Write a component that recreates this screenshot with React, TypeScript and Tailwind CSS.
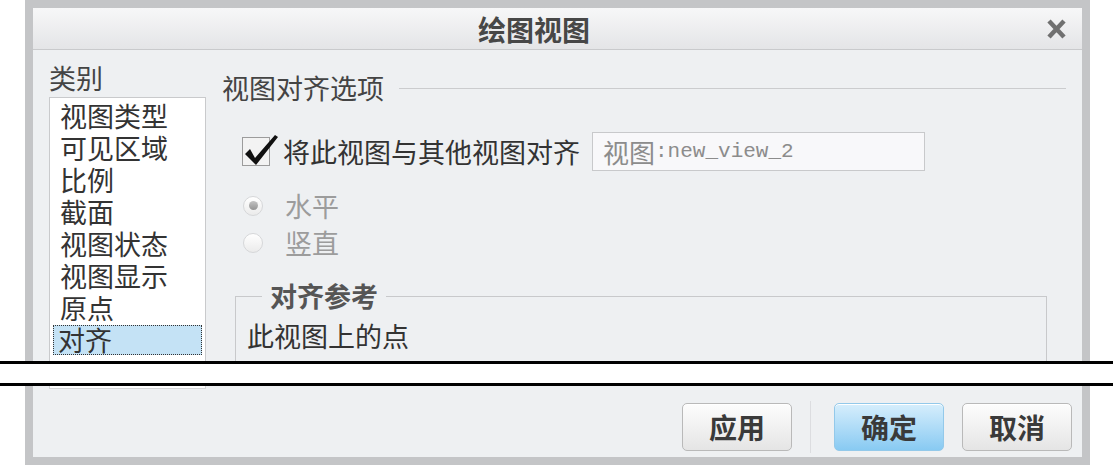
import { useState } from 'react';

const categories = ['视图类型', '可见区域', '比例', '截面', '视图状态', '视图显示', '原点', '对齐'];

function Radio({ label, checked }: { label: string; checked?: boolean }) {
  return (
    <div className="h-[37px] flex items-center pl-[21px]">
      <div className="w-[20px] h-[20px] rounded-full border border-[#d6d7d9] bg-gradient-to-b from-white to-[#ebebeb] flex items-center justify-center">
        {checked && <div className="w-[9px] h-[9px] rounded-full bg-gradient-to-b from-[#c4c4c4] to-[#949494]" />}
      </div>
      <span className="ml-[22px] text-[27px] leading-[30px] text-[#9c9c9c]">{label}</span>
    </div>
  );
}

function DialogButton({ label, primary }: { label: string; primary?: boolean }) {
  return (
    <button
      className={`w-[110px] h-[48px] rounded-[5px] border flex items-center justify-center text-[28px] font-bold text-[#3a3a3a] shadow-[inset_0_1px_0_#ffffff] ${
        primary
          ? 'border-[#93c9ea] bg-gradient-to-b from-[#d6eefc] to-[#88caf2]'
          : 'border-[#b9b9b9] bg-gradient-to-b from-[#fdfdfd] to-[#e5e5e5]'
      }`}
    >
      {label}
    </button>
  );
}

export default function App() {
  const [selected, setSelected] = useState('对齐');
  const [aligned, setAligned] = useState(true);

  return (
    <div className="w-[1115px] h-[466px] bg-white flex flex-col overflow-hidden font-['Noto_Sans_CJK_SC',sans-serif] text-[#333]">
      {/* Upper half of the dialog */}
      <div className="ml-[25px] w-[1065px] h-[361px] shrink-0 overflow-hidden border-x-8 border-t-8 border-[#c4c5c7] bg-[#eef0f2] flex flex-col">
        {/* Title bar */}
        <div className="h-[42px] shrink-0 flex items-center border-b border-[#c9cacc] bg-gradient-to-b from-[#f7f7f8] to-[#e4e5e7]">
          <span className="pl-[445px] text-[28px] font-bold leading-none text-[#474747]">绘图视图</span>
          <svg className="ml-auto mr-[16px] w-[19px] h-[20px]" viewBox="0 0 19 20">
            <path d="M2 2 L17 18 M17 2 L2 18" stroke="#707070" strokeWidth={4.5} />
          </svg>
        </div>

        <div className="flex flex-1">
          {/* Category list */}
          <div className="w-[173px] shrink-0 pl-[16px] pt-[13px]">
            <div className="text-[27px] leading-[30px] text-[#444]">类别</div>
            <div className="mt-[4px] h-[300px] bg-white border border-[#c9cacc] pt-[2px]">
              {categories.map((c) =>
                c === selected ? (
                  <div
                    key={c}
                    className="mx-[3px] my-[1px] h-[30px] border border-dotted border-[#333] bg-[#c4e2f5] pl-[4px] text-[27px] leading-[28px]"
                  >
                    {c}
                  </div>
                ) : (
                  <div
                    key={c}
                    onClick={() => setSelected(c)}
                    className="h-[32px] pl-[10px] text-[27px] leading-[32px]"
                  >
                    {c}
                  </div>
                )
              )}
            </div>
          </div>

          {/* Options */}
          <div className="flex-1 pl-[16px] pr-[16px] pt-[23px]">
            <div className="h-[30px] flex items-center">
              <span className="text-[27px] leading-[30px] text-[#444]">视图对齐选项</span>
              <div className="flex-1 h-px bg-[#cbccce] ml-[15px]" />
            </div>

            <div className="mt-[29px] h-[39px] flex items-center pl-[20px]">
              <div
                onClick={() => setAligned(!aligned)}
                className="relative w-[28px] h-[29px] border border-[#9c9c9c] bg-[#f3f3f3]"
              >
                {aligned && (
                  <svg className="absolute left-0 top-[-4px] w-[36px] h-[34px]" viewBox="0 0 36 34">
                    <polygon points="2,20 7,15 12,24 32,1 35,3 13,31" fill="#111" />
                  </svg>
                )}
              </div>
              <span className="ml-[13px] text-[27px] leading-[30px]">将此视图与其他视图对齐</span>
              <div className="ml-[12px] w-[333px] h-[39px] border border-[#c8c9cb] bg-[#f8f8fa] flex items-center pl-[10px] text-[#8c8c8c]">
                <span className="text-[26px] leading-[30px]">视图</span>
                <span className="font-['Liberation_Mono',monospace] text-[21px] leading-[30px]">:new_view_2</span>
              </div>
            </div>

            <div className="mt-[16px]">
              <Radio label="水平" checked />
              <Radio label="竖直" />
            </div>

            <fieldset className="mt-[20px] ml-[13px] mr-[19px] h-[200px] border border-[#c8c9cb]">
              <legend className="ml-[26px] px-[8px] text-[27px] leading-[30px] font-bold text-[#555]">对齐参考</legend>
              <div className="pl-[11px] pt-[10px] text-[27px] leading-[30px]">此视图上的点</div>
            </fieldset>
          </div>
        </div>
      </div>

      {/* Break marks */}
      <div className="w-[1113px] h-[25px] shrink-0 border-y-[3px] border-black bg-white" />

      {/* Lower half of the dialog */}
      <div className="ml-[25px] w-[1065px] h-[79px] shrink-0 border-x-8 border-b-8 border-[#c4c5c7] bg-[#eef0f2] flex flex-col">
        <div className="ml-[16px] w-[157px] h-[3px] bg-white border-x border-b border-[#d4d5d7]" />
        <div className="mt-[12px] flex items-center justify-end pr-[10px]">
          <DialogButton label="应用" />
          <div className="ml-[18px] mr-[23px] w-px h-[52px] bg-[#dcdde0]" />
          <DialogButton label="确定" primary />
          <div className="w-[18px]" />
          <DialogButton label="取消" />
        </div>
      </div>
    </div>
  );
}
